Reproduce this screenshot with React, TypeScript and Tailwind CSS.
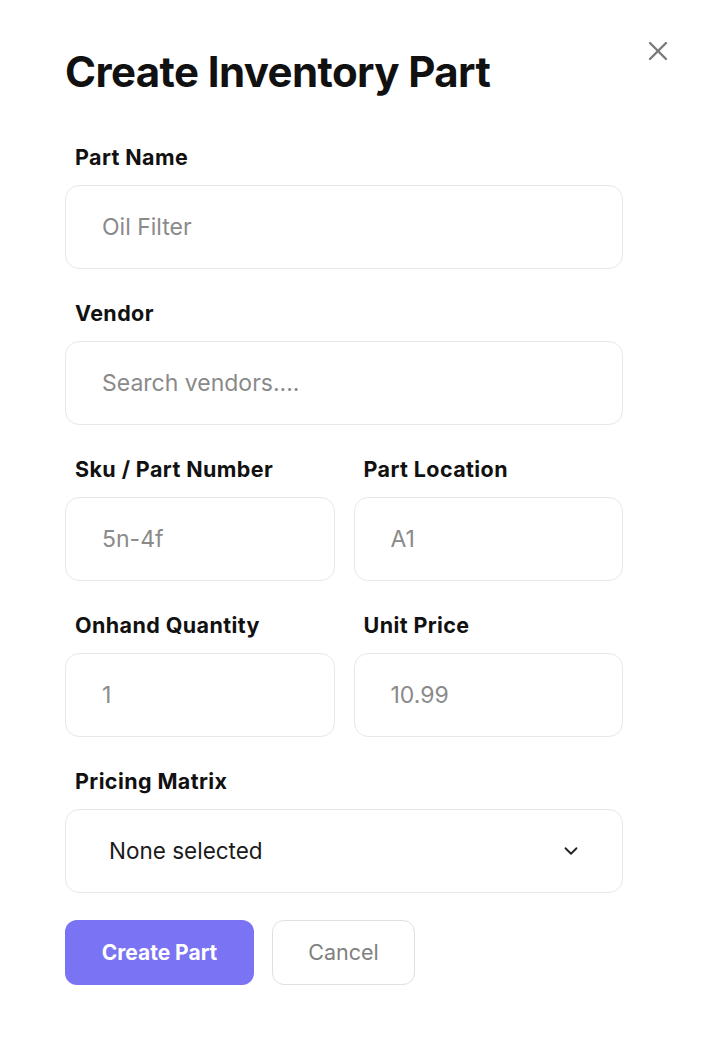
import { X, ChevronDown } from 'lucide-react';

const Field = ({ label, placeholder }: { label: string; placeholder: string }) => (
  <div className="flex flex-col">
    <label className="pl-[10px] text-[21.5px] font-bold leading-[28px] tracking-[0.4px] text-[#111111]">{label}</label>
    <input
      className="mt-[14px] h-[84px] w-full rounded-[14px] border border-[#e8e8e8] px-[36px] text-[23px] text-[#888888] outline-none placeholder:text-[#8a8a8a]"
      placeholder={placeholder}
    />
  </div>
);

const App = () => {
  return (
    <div className="relative min-h-[1040px] w-[706px] bg-white font-['Inter',sans-serif]">
      <button className="absolute right-[32px] top-[35px] text-[#7a7a7a]">
        <X size={32} strokeWidth={1.8} />
      </button>
      <div className="flex flex-col px-[65px] pt-[44px]">
        <h1 className="text-[42px] font-bold leading-[56px] tracking-[-0.6px] text-[#111111]">Create Inventory Part</h1>
        <div className="mt-[43px] flex w-[558px] flex-col gap-[30px]">
          <Field label="Part Name" placeholder="Oil Filter" />
          <Field label="Vendor" placeholder="Search vendors...." />
          <div className="grid grid-cols-2 gap-[19px]">
            <Field label="Sku / Part Number" placeholder="5n-4f" />
            <Field label="Part Location" placeholder="A1" />
          </div>
          <div className="grid grid-cols-2 gap-[19px]">
            <Field label="Onhand Quantity" placeholder="1" />
            <Field label="Unit Price" placeholder="10.99" />
          </div>
          <div className="flex flex-col">
            <label className="pl-[10px] text-[21.5px] font-bold leading-[28px] tracking-[0.4px] text-[#111111]">Pricing Matrix</label>
            <div className="mt-[14px] flex h-[84px] items-center justify-between rounded-[14px] border border-[#e8e8e8] pl-[43px] pr-[40px]">
              <span className="text-[22.5px] text-[#1a1a1a]">None selected</span>
              <ChevronDown size={22} strokeWidth={2} className="text-[#222]" />
            </div>
          </div>
        </div>
        <div className="mt-[27px] flex gap-[18px]">
          <button className="h-[65px] w-[189px] rounded-[12px] bg-[#7a73f4] text-[21px] font-bold text-white">Create Part</button>
          <button className="h-[65px] w-[143px] rounded-[12px] border border-[#e0e0e0] text-[21.5px] text-[#808080]">Cancel</button>
        </div>
      </div>
    </div>
  );
};

export default App;
